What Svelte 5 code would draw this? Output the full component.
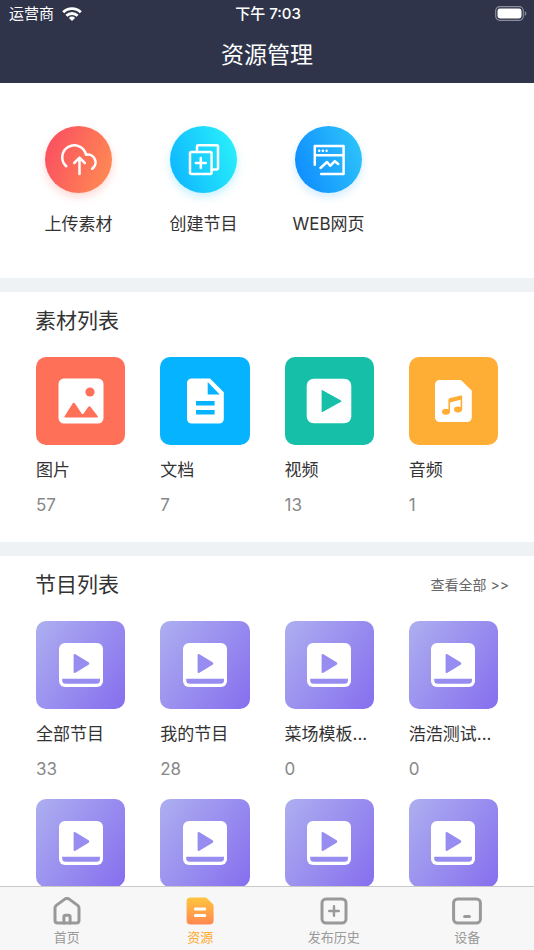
<script>
  let activeTab = $state("resource");

  const actions = [
    { id: "upload", name: "上传素材" },
    { id: "create", name: "创建节目" },
    { id: "web", name: "WEB网页" },
  ];

  const materials = [
    { type: "image", name: "图片", count: 57 },
    { type: "doc", name: "文档", count: 7 },
    { type: "video", name: "视频", count: 13 },
    { type: "audio", name: "音频", count: 1 },
  ];

  const programs = [
    { name: "全部节目", count: 33 },
    { name: "我的节目", count: 28 },
    { name: "菜场模板...", count: 0 },
    { name: "浩浩测试...", count: 0 },
    {},
    {},
    {},
    {},
  ];

  const tabs = [
    { id: "home", name: "首页" },
    { id: "resource", name: "资源" },
    { id: "history", name: "发布历史" },
    { id: "device", name: "设备" },
  ];
</script>

<div class="app">
  <header>
    <div class="status">
      <div class="carrier">
        <span>运营商</span>
        <svg width="20" height="14" viewBox="0 0 20 14" fill="none" stroke="#fff" stroke-width="2.9">
          <path d="M1.2 5.2a12.6 12.6 0 0 1 17.6 0" />
          <path d="M4.4 8.8a8 8 0 0 1 11.2 0" />
          <path d="M10 14l-3.1-3.1a4.4 4.4 0 0 1 6.2 0z" fill="#fff" stroke="none" />
        </svg>
      </div>
      <div class="time">下午 7:03</div>
      <div class="battery">
        <svg width="32" height="15" viewBox="0 0 32 15">
          <rect x="0.7" y="0.7" width="27.6" height="13.6" rx="4" fill="none" stroke="#8a8d9b" stroke-width="1.2" />
          <rect x="2.5" y="2.5" width="24" height="10" rx="2.4" fill="#fff" />
          <path d="M29.8 5.2c2 .6 2 4 0 4.6z" fill="#8a8d9b" />
        </svg>
      </div>
    </div>
    <h1>资源管理</h1>
  </header>

  <main>
    <section class="actions">
      {#each actions as action}
        <button class="action">
          <span class="circle {action.id}">
            <svg width="36" height="36" viewBox="0 0 36 36" fill="none" stroke="#fff" stroke-width="2.5" stroke-linecap="round" stroke-linejoin="round">
              {#if action.id === "upload"}
                <path d="M5.2 24.2A12 12 0 1 1 25 12.8a7.8 7.8 0 0 1 6.2 14" />
                <path d="M18.5 32V16M13.2 21l5.3-5.3 5.3 5.3" />
              {:else if action.id === "create"}
                <path d="M11 10V4.5a1.2 1.2 0 0 1 1.2-1.2h18.6a1.2 1.2 0 0 1 1.2 1.2v21.8a1.2 1.2 0 0 1-1.2 1.2h-5" />
                <rect x="4" y="10" width="21.6" height="22" rx="1.4" />
                <path d="M14.8 16v10M9.8 21h10" />
              {:else}
                <path d="M3.8 22.8V4h28.8v28H10.2M3.8 13.2h28.8" />
                <path d="M9.5 26l6.5-6 3.2 3.8 4.6-4.6 3.4 2.8" />
                <path d="M8.2 8.8h.01M11.9 8.8h.01M15.6 8.8h.01" />
              {/if}
            </svg>
          </span>
          <span class="action-name">{action.name}</span>
        </button>
      {/each}
    </section>

    <section class="list">
      <div class="list-head">
        <h2>素材列表</h2>
      </div>
      <div class="grid">
        {#each materials as item}
          <button class="item">
            <span class="tile {item.type}">
              <svg width="46" height="46" viewBox="0 0 46 46" fill="#fff">
                {#if item.type === "image"}
                  <rect x="0.5" y="0.5" width="45" height="45" rx="5.5" />
                  <g fill="#ff7058">
                    <circle cx="32" cy="14" r="4.6" />
                    <path d="M6.6 38.2l8-12.6q1.2-1.6 2.4 0l6.6 10q1 1.2 2 0l4.6-6.6q1.2-1.6 2.4 0l7.2 9.2q.6 1.3-.6 1.3h-32q-1.4 0-.6-1.3z" />
                  </g>
                {:else if item.type === "doc"}
                  <path d="M9.5.5H28L41.8 14.3V41a4.5 4.5 0 0 1-4.5 4.5H9.5A4.5 4.5 0 0 1 5 41V5A4.5 4.5 0 0 1 9.5.5z" />
                  <path d="M25.7 4v12.4h12zM14 23h18.6v4.6H14zM14 32h18.6v4.6H14z" fill="#05b3ff" />
                {:else if item.type === "video"}
                  <rect x="0.7" y="0.7" width="44.6" height="44.6" rx="7" />
                  <path d="M16.6 12.2l18.4 10.2q1 .7 0 1.4L16.6 34q-1 .4-1-.6V12.8q0-1 1-.6z" fill="#16c0a8" />
                {:else}
                  <path d="M9.6 2H31L41.8 12.8v26.6a4.6 4.6 0 0 1-4.6 4.6H9.6A4.6 4.6 0 0 1 5 39.4V6.6A4.6 4.6 0 0 1 9.6 2z" />
                  <g fill="#ffae35">
                    <ellipse cx="16" cy="33.8" rx="4" ry="3" />
                    <ellipse cx="28" cy="31.4" rx="4" ry="3" />
                    <path d="M18.4 34V21.8q0-1.2 1.2-1.5l11-2.8q1.6-.3 1.6 1.3V32h-1.6V21.8L20 24.6V34z" />
                  </g>
                {/if}
              </svg>
            </span>
            <span class="name">{item.name}</span>
            <span class="count">{item.count}</span>
          </button>
        {/each}
      </div>
    </section>

    <section class="list">
      <div class="list-head">
        <h2>节目列表</h2>
        <a href="#all">查看全部 &gt;&gt;</a>
      </div>
      <div class="grid">
        {#each programs as item}
          <button class="item">
            <span class="tile program">
              <svg width="46" height="46" viewBox="0 0 46 46">
                <rect x="1" y="1" width="44" height="44" rx="6" fill="#fff" />
                <path d="M17.4 12.3l13.2 8q1.6 1.2 0 2.4l-13.2 8q-1.8.8-1.8-1V13.3q0-1.8 1.8-1z" fill="#978df0" />
                <path d="M4.2 36.8h37.8v1.4a3.6 3.6 0 0 1-3.6 3.6H7.8a3.6 3.6 0 0 1-3.6-3.6z" fill="#978df0" />
              </svg>
            </span>
            <span class="name">{item.name}</span>
            <span class="count">{item.count}</span>
          </button>
        {/each}
      </div>
    </section>
  </main>

  <nav>
    {#each tabs as tab}
      <button class="tab" class:active={activeTab === tab.id} onclick={() => (activeTab = tab.id)}>
        <svg width="30" height="28" viewBox="0 0 30 28" fill="none" stroke="currentColor" stroke-width="3" stroke-linecap="round" stroke-linejoin="round">
          {#if tab.id === "home"}
            <path d="M3 11q0-1.6 1.3-2.6l8.9-6.5q1.8-1.2 3.6 0l8.9 6.5Q27 9.4 27 11v12.4a2.6 2.6 0 0 1-2.6 2.6H5.6A2.6 2.6 0 0 1 3 23.4z" />
            <path d="M11.9 26v-6a1.8 1.8 0 0 1 1.8-1.8h2.6a1.8 1.8 0 0 1 1.8 1.8v6" />
          {:else if tab.id === "resource"}
            <defs>
              <linearGradient id="sheet" x1="0" y1="0" x2="0" y2="1">
                <stop offset="0" stop-color="#ffc53f" />
                <stop offset="1" stop-color="#ff8850" />
              </linearGradient>
            </defs>
            <path d="M5.8.5h14.4q1 0 1.8.8l5.8 5.8q.8.8.8 1.8v14.6a4 4 0 0 1-4 4h-19a4 4 0 0 1-4-4v-19a4 4 0 0 1 4-4z" fill="url(#sheet)" stroke="none" />
            <path d="M10.4 12h9.4M10.4 18.4h9.4" stroke="#fff" />
          {:else if tab.id === "history"}
            <rect x="3" y="2" width="24" height="24" rx="4" />
            <path d="M15 9.2v9.6M10.2 14h9.6" stroke-width="2.4" />
          {:else}
            <rect x="1.6" y="2" width="26.8" height="24" rx="4" />
            <path d="M12.6 19.6h4.8" />
          {/if}
        </svg>
        <span>{tab.name}</span>
      </button>
    {/each}
  </nav>
</div>

<style>
  :global(body) {
    margin: 0;
    background: #fff;
  }

  .app {
    display: flex;
    flex-direction: column;
    height: 100vh;
    color: #333;
    font-family: Inter, "Noto Sans CJK SC", sans-serif;
  }

  button {
    margin: 0;
    padding: 0;
    border: none;
    background: none;
    color: inherit;
    font-family: inherit;
    cursor: pointer;
  }

  svg {
    display: block;
  }

  header {
    flex: none;
    background: #2f344a;
    color: #fff;
  }

  .status {
    display: grid;
    grid-template-columns: 1fr auto 1fr;
    align-items: center;
    height: 27px;
    padding: 0 7px 0 9px;
    font-size: 15px;
    line-height: 27px;
  }

  .carrier {
    display: flex;
    align-items: center;
    gap: 8px;
  }

  .time {
    font-weight: 500;
  }

  .battery {
    justify-self: end;
  }

  h1 {
    margin: 0;
    font-size: 23px;
    font-weight: 400;
    line-height: 56px;
    text-align: center;
  }

  main {
    flex: 1;
    min-height: 0;
    overflow-y: auto;
    scrollbar-width: none;
  }

  .actions {
    display: grid;
    grid-template-columns: repeat(4, 1fr);
    padding: 43px 18px 42px 16px;
  }

  .action {
    display: flex;
    flex-direction: column;
    align-items: center;
    gap: 19px;
  }

  .circle {
    display: flex;
    align-items: center;
    justify-content: center;
    width: 67px;
    height: 67px;
    border-radius: 50%;
  }

  .upload {
    background: linear-gradient(110deg, #fa4a62, #ff8f52);
    box-shadow: 0 4px 8px rgba(255, 100, 90, 0.25);
  }

  .create {
    background: linear-gradient(70deg, #0cb2ff, #2bf4fa);
    box-shadow: 0 4px 8px rgba(30, 200, 255, 0.25);
  }

  .web {
    background: linear-gradient(70deg, #0c88ff, #30c8fa);
    box-shadow: 0 4px 8px rgba(30, 160, 255, 0.2);
  }

  .action-name {
    font-size: 17px;
    line-height: 24px;
  }

  .list {
    padding: 15px 36px 25px;
    border-top: 14px solid #eef2f5;
  }

  .list-head {
    display: flex;
    align-items: center;
    justify-content: space-between;
    margin: 0 -11px 22px -1px;
  }

  h2 {
    margin: 0;
    font-size: 21px;
    font-weight: 400;
    line-height: 28px;
  }

  a {
    color: #666;
    font-size: 14px;
    line-height: 28px;
    text-decoration: none;
  }

  .grid {
    display: grid;
    grid-template-columns: repeat(4, minmax(0, 1fr));
    gap: 18px 35px;
  }

  .item {
    display: flex;
    flex-direction: column;
    gap: 11px;
    text-align: left;
  }

  .tile {
    display: flex;
    align-items: center;
    justify-content: center;
    width: 100%;
    height: 88px;
    margin-bottom: 2px;
    border-radius: 10px;
  }

  .image {
    background: #ff7058;
  }

  .doc {
    background: #05b3ff;
  }

  .video {
    background: #16c0a8;
  }

  .audio {
    background: #ffae35;
  }

  .program {
    background: linear-gradient(125deg, #adaff0, #866eee);
  }

  .name,
  .count {
    width: 100%;
    height: 24px;
    font-size: 17px;
    line-height: 24px;
    white-space: nowrap;
  }

  .count {
    color: #888;
  }

  nav {
    display: flex;
    flex: none;
    border-top: 1px solid #c8c8c8;
    background: #f7f7f7;
  }

  .tab {
    display: flex;
    flex: 1;
    flex-direction: column;
    align-items: center;
    gap: 4px;
    padding: 10px 0 5px;
    color: #999;
    font-size: 13px;
    line-height: 16px;
  }

  .active {
    color: #ffa82e;
  }
</style>
